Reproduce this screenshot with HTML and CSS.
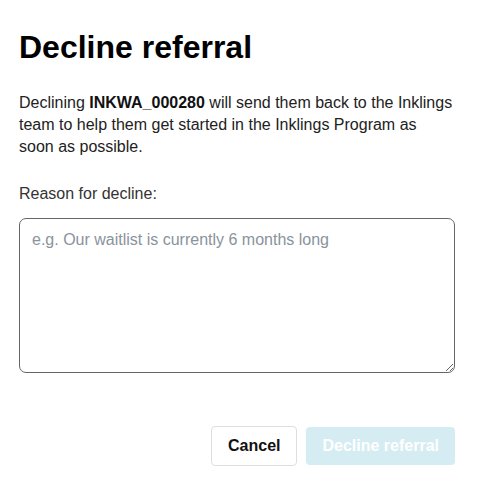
FILE: index.html
```html
<!DOCTYPE html>
<html>
<head>
<meta charset="utf-8">
<link rel="stylesheet" href="styles.css">
</head>
<body>
<div class="modal">
  <h1 class="title">Decline referral</h1>
  <p class="desc">Declining <strong>INKWA_000280</strong> will send them back to the Inklings team to help them get started in the Inklings Program as soon as possible.</p>
  <label class="label" for="reason">Reason for decline:</label>
  <textarea id="reason" class="reason" placeholder="e.g. Our waitlist is currently 6 months long"></textarea>
  <div class="actions">
    <button class="btn btn-cancel">Cancel</button>
    <button class="btn btn-primary" disabled>Decline referral</button>
  </div>
</div>
</body>
</html>
```
FILE: styles.css
```css
html, body {
  margin: 0;
  padding: 0;
  background: #fff;
}
body {
  font-family: "Liberation Sans", Arial, sans-serif;
  color: #222;
}
.modal {
  padding: 27px 24px 0 19px;
  display: flex;
  flex-direction: column;
}
.title {
  margin: 0;
  font-size: 32px;
  line-height: 40px;
  font-weight: 700;
  color: #000;
}
.desc {
  margin: 25px 0 0;
  font-size: 16px;
  line-height: 22px;
  color: #222;
}
.desc strong {
  color: #111;
}
.label {
  margin-top: 25px;
  font-size: 16px;
  line-height: 22px;
  color: #333;
}
.reason {
  margin-top: 13px;
  height: 155px;
  box-sizing: border-box;
  border: 1px solid #666;
  border-radius: 7px;
  padding: 10px 12px;
  font-family: "Liberation Sans", Arial, sans-serif;
  font-size: 16px;
  line-height: 22px;
  resize: vertical;
  outline: none;
}
.reason::placeholder {
  color: #89939c;
}
.actions {
  margin-top: 53px;
  display: flex;
  justify-content: flex-end;
  align-items: center;
  gap: 9px;
}
.btn {
  font-family: "Liberation Sans", Arial, sans-serif;
  font-size: 16px;
  font-weight: 700;
  border-radius: 4px;
  box-sizing: border-box;
  cursor: pointer;
}
.btn-cancel {
  height: 40px;
  padding: 0 16px;
  background: #fff;
  color: #111;
  border: 1px solid #dedede;
}
.btn-primary {
  height: 38px;
  padding: 0 16px;
  background: #d5ecf3;
  color: #fff;
  border: none;
}
```
